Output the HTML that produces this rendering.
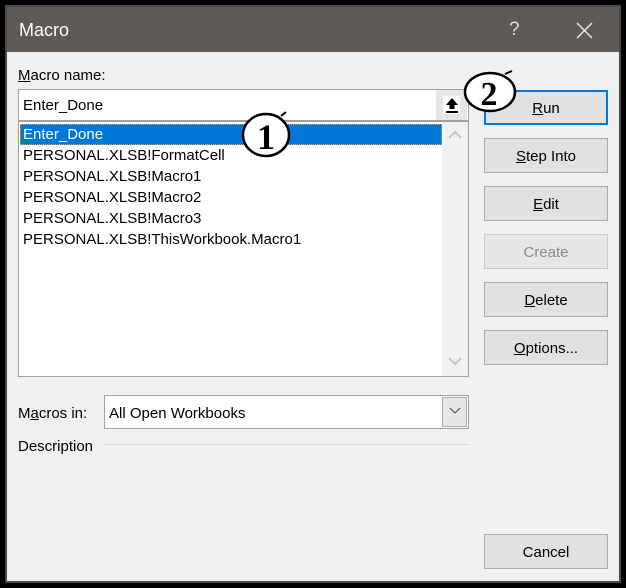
<!DOCTYPE html>
<html><head><style>
*{box-sizing:border-box;margin:0;padding:0}
body{width:626px;height:588px;background:#000;position:relative;overflow:hidden;font-family:"Liberation Sans",sans-serif;font-size:15px;color:#000}
.win{position:absolute;left:5px;top:5px;width:616px;height:578px;background:#4a4a4a}
.in{position:absolute;left:7px;top:7px;width:612px;height:574px;background:#f0f0f0}
.title{position:absolute;left:7px;top:7px;width:612px;height:45px;background:#5f5a55;color:#fff}
.a{position:absolute;white-space:nowrap}
.btn{position:absolute;left:484px;width:124px;height:35px;background:#e1e1e1;border:1px solid #adadad;text-align:center;line-height:35px;font-size:15px}
u{text-decoration:underline}
.row{position:absolute;left:23px;height:20px;line-height:22px;font-size:15px}
</style></head><body>
<div class="win"></div>
<div class="in"></div>
<div class="title">
 <div class="a" style="left:12px;top:13px;font-size:18px">Macro</div>
 <div class="a" style="left:502px;top:12px;font-size:19px;color:#ddd">?</div>
 <svg class="a" style="left:569px;top:15px" width="17" height="17"><path d="M1 1L16 16M16 1L1 16" stroke="#eee" stroke-width="1.4"/></svg>
</div>
<div class="a" style="left:18px;top:67px"><u>M</u>acro name:</div>
<div class="a" style="left:18px;top:89px;width:451px;height:32px;background:#fff;border:1px solid #a0a0a0"></div>
<div class="a" style="left:23px;top:97px">Enter_Done</div>
<div class="a" style="left:436px;top:90px;width:31px;height:30px;background:#e6e6e6"></div>
<div class="a" style="left:443px;top:96px;width:17px;height:18px;background:#fff"></div>
<svg class="a" style="left:444px;top:96px" width="16" height="18"><path d="M8 2L2 9H5.5V13H10.5V9H14Z" fill="#000"/><rect x="2" y="15" width="12" height="2" fill="#000"/></svg>
<div class="a" style="left:18px;top:121px;width:451px;height:256px;background:#fff;border:1px solid #a0a0a0"></div>
<div class="a" style="left:442px;top:122px;width:26px;height:254px;background:#f0f0f0"></div>
<svg class="a" style="left:447px;top:130px" width="16" height="10"><path d="M2 8L8 2L14 8" stroke="#c4c4c4" stroke-width="2" fill="none"/></svg>
<svg class="a" style="left:447px;top:356px" width="16" height="10"><path d="M2 2L8 8L14 2" stroke="#c4c4c4" stroke-width="2" fill="none"/></svg>
<div class="a" style="left:20px;top:124px;width:422px;height:21px;background:#0078d7;border:1px dotted #f39c40"></div>
<div class="row" style="top:124px;color:#fff">Enter_Done</div>
<div class="row" style="top:145px">PERSONAL.XLSB!FormatCell</div>
<div class="row" style="top:166px">PERSONAL.XLSB!Macro1</div>
<div class="row" style="top:187px">PERSONAL.XLSB!Macro2</div>
<div class="row" style="top:208px">PERSONAL.XLSB!Macro3</div>
<div class="row" style="top:229px">PERSONAL.XLSB!ThisWorkbook.Macro1</div>
<div class="btn" style="top:90px;border:2px solid #0078d7;line-height:33px"><u>R</u>un</div>
<div class="btn" style="top:138px"><u>S</u>tep Into</div>
<div class="btn" style="top:186px"><u>E</u>dit</div>
<div class="btn" style="top:234px;color:#8a8a8a;background:#e6e6e6;border-color:#c8c8c8">Create</div>
<div class="btn" style="top:282px"><u>D</u>elete</div>
<div class="btn" style="top:330px"><u>O</u>ptions...</div>
<div class="btn" style="top:534px">Cancel</div>
<div class="a" style="left:18px;top:405px">M<u>a</u>cros in:</div>
<div class="a" style="left:104px;top:395px;width:365px;height:34px;background:#fff;border:1px solid #a0a0a0"></div>
<div class="a" style="left:109px;top:405px">All Open Workbooks</div>
<div class="a" style="left:442px;top:397px;width:25px;height:30px;background:#e6e6e6;border:1px solid #adadad"></div>
<svg class="a" style="left:448px;top:406px" width="14" height="10"><path d="M2 2L7 7L12 2" stroke="#444" stroke-width="1" fill="none"/></svg>
<div class="a" style="left:18px;top:438px">Description</div>
<div class="a" style="left:103px;top:444px;width:366px;height:1px;background:#dadada"></div>
<svg class="a" style="left:0;top:0" width="626" height="588">
 <ellipse cx="266" cy="135" rx="23" ry="21" fill="#fff" stroke="#000" stroke-width="2.5"/>
 <path d="M281 116L286 112" stroke="#000" stroke-width="2"/>
 <text x="266" y="149" text-anchor="middle" font-family="Liberation Serif,serif" font-weight="bold" font-size="36">1</text>
 <ellipse cx="490" cy="92" rx="25" ry="19" fill="#fff" stroke="#000" stroke-width="2.5"/>
 <path d="M505 74L512 71" stroke="#000" stroke-width="2"/>
 <text x="489" y="105" text-anchor="middle" font-family="Liberation Serif,serif" font-weight="bold" font-size="34">2</text>
</svg>
</body></html>
